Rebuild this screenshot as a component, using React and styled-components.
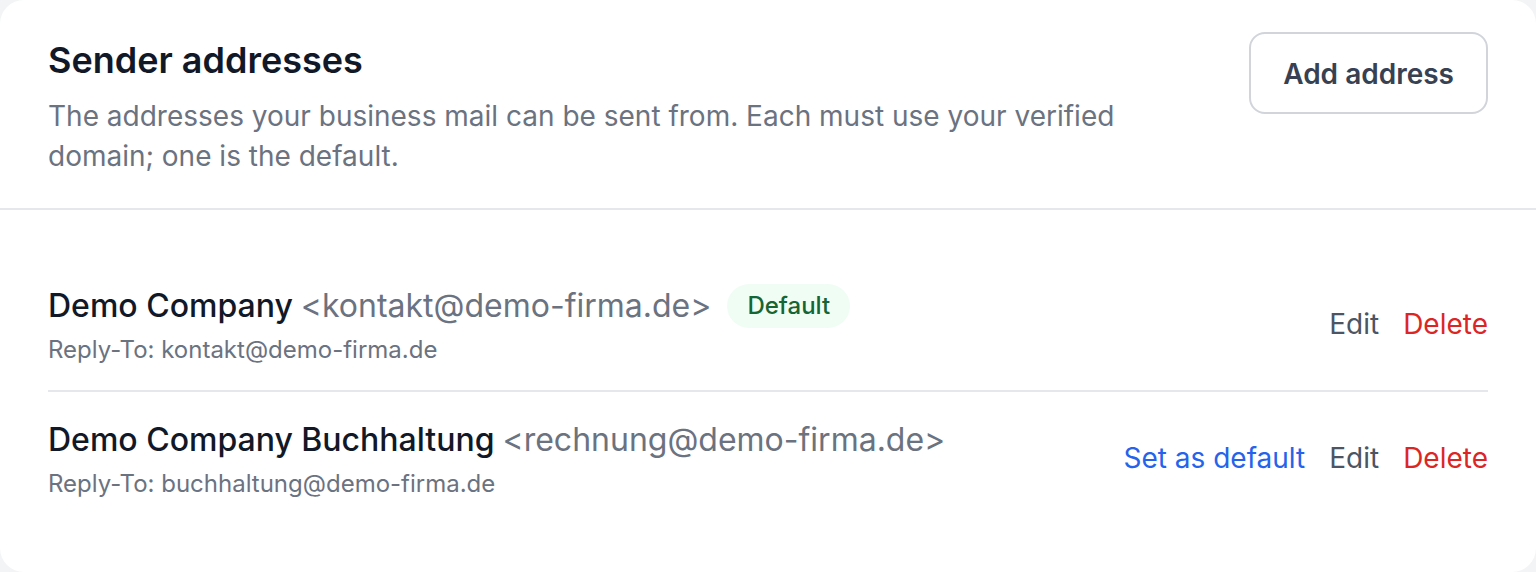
import React from "react";
import styled, { createGlobalStyle } from "styled-components";

const GlobalStyle = createGlobalStyle`
  html, body {
    margin: 0;
    padding: 0;
    background: #f3f4f6;
  }
  body {
    font-family: Inter, "Noto Sans", "Liberation Sans", sans-serif;
    -webkit-font-smoothing: antialiased;
  }
  * { box-sizing: border-box; }
`;

const Card = styled.section`
  width: 1536px;
  height: 572px;
  background: #ffffff;
  border-radius: 24px;
  overflow: hidden;
  display: flex;
  flex-direction: column;
`;

const Header = styled.header`
  display: flex;
  justify-content: space-between;
  align-items: flex-start;
  gap: 32px;
  padding: 32px 48px;
  border-bottom: 2px solid #e5e7eb;
`;

const HeaderText = styled.div`
  display: flex;
  flex-direction: column;
  gap: 8px;
  max-width: 1100px;
`;

const Title = styled.h2`
  margin: 0;
  font-size: 36px;
  line-height: 56px;
  font-weight: 600;
  color: #111827;
`;

const Description = styled.p`
  margin: 0;
  font-size: 28px;
  line-height: 40px;
  color: #6b7280;
`;

const OutlineButton = styled.button`
  flex-shrink: 0;
  height: 82px;
  padding: 2px 32px 0;
  border: 2px solid #d1d5db;
  border-radius: 16px;
  background: #ffffff;
  font-family: inherit;
  font-size: 28px;
  font-weight: 600;
  color: #374151;
  cursor: pointer;
`;

const List = styled.ul`
  list-style: none;
  margin: 0;
  padding: 48px 48px;
  display: flex;
  flex-direction: column;
`;

const Row = styled.li`
  display: flex;
  align-items: center;
  justify-content: space-between;
  gap: 32px;
  padding: 24px 0;
  & + & {
    border-top: 2px solid #e5e7eb;
  }
`;

const Info = styled.div`
  display: flex;
  flex-direction: column;
  gap: 4px;
  min-width: 0;
`;

const NameLine = styled.div`
  display: flex;
  align-items: center;
  font-size: 32px;
  line-height: 48px;
  font-weight: 500;
  color: #111827;
  white-space: nowrap;
`;

const Email = styled.span`
  color: #6b7280;
  font-weight: 400;
  margin-left: 8px;
`;

const Badge = styled.span`
  margin-left: 16px;
  height: 44px;
  padding: 0 20px;
  display: inline-flex;
  align-items: center;
  border-radius: 9999px;
  background: #f0fdf4;
  color: #166534;
  font-size: 24px;
  font-weight: 500;
`;

const ReplyTo = styled.div`
  font-size: 24px;
  line-height: 32px;
  color: #6b7280;
`;

const Actions = styled.div`
  display: flex;
  align-items: center;
  gap: 24px;
  flex-shrink: 0;
`;

const tones = {
  primary: "#2563eb",
  neutral: "#4b5563",
  danger: "#dc2626",
};

const LinkButton = styled.button`
  border: 0;
  padding: 0;
  background: none;
  font-family: inherit;
  font-size: 28px;
  line-height: 40px;
  color: ${(p) => tones[p.$tone]};
  cursor: pointer;
`;

const senders = [
  {
    name: "Demo Company",
    email: "kontakt@demo-firma.de",
    replyTo: "kontakt@demo-firma.de",
    isDefault: true,
  },
  {
    name: "Demo Company Buchhaltung",
    email: "rechnung@demo-firma.de",
    replyTo: "buchhaltung@demo-firma.de",
    isDefault: false,
  },
];

export default function App() {
  return (
    <>
      <GlobalStyle />
      <Card>
        <Header>
          <HeaderText>
            <Title>Sender addresses</Title>
            <Description>
              The addresses your business mail can be sent from. Each must use
              your verified domain; one is the default.
            </Description>
          </HeaderText>
          <OutlineButton>Add address</OutlineButton>
        </Header>
        <List>
          {senders.map((s) => (
            <Row key={s.email}>
              <Info>
                <NameLine>
                  {s.name}
                  <Email>&lt;{s.email}&gt;</Email>
                  {s.isDefault && <Badge>Default</Badge>}
                </NameLine>
                <ReplyTo>Reply-To: {s.replyTo}</ReplyTo>
              </Info>
              <Actions>
                {!s.isDefault && (
                  <LinkButton $tone="primary">Set as default</LinkButton>
                )}
                <LinkButton $tone="neutral">Edit</LinkButton>
                <LinkButton $tone="danger">Delete</LinkButton>
              </Actions>
            </Row>
          ))}
        </List>
      </Card>
    </>
  );
}
